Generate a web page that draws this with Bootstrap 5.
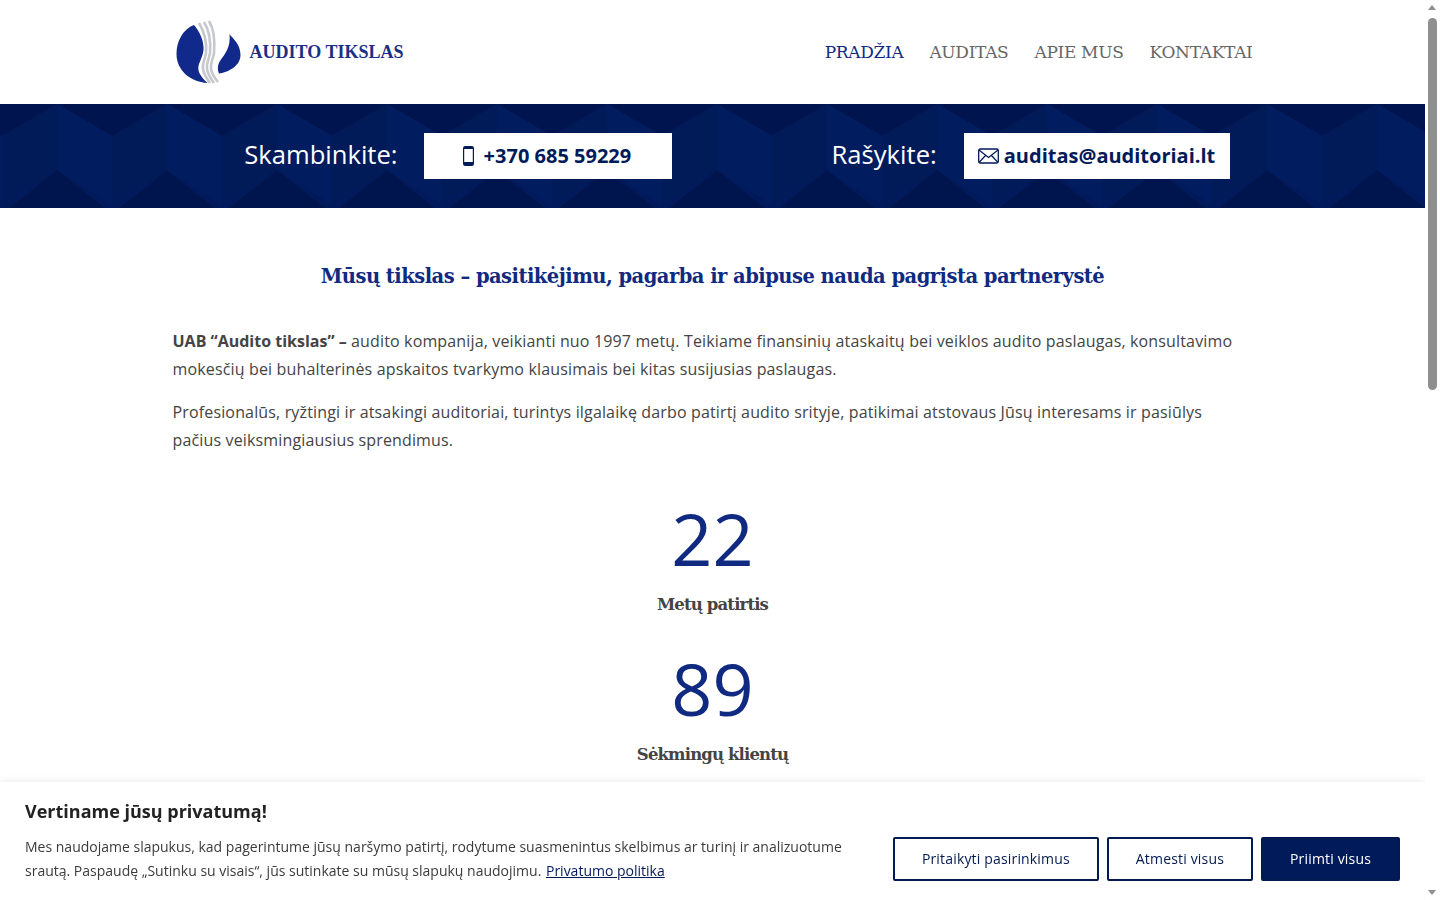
<!DOCTYPE html>
<html lang="lt">
<head>
  <meta charset="UTF-8" />
  <meta name="viewport" content="width=device-width, initial-scale=1.0" />
  <title>Audito tikslas</title>
  <link href="https://cdn.jsdelivr.net/npm/bootstrap@5.3.3/dist/css/bootstrap.min.css" rel="stylesheet" />
  <script src="https://cdn.jsdelivr.net/npm/bootstrap@5.3.3/dist/js/bootstrap.bundle.min.js"></script>
  <style>
    html, body { height: 100%; overflow: hidden; }
    body { font-family: "Open Sans", sans-serif; color: #444; background: #fff; }
    .page { width: 1425px; height: 900px; overflow: hidden; }
    .wrap { width: 1080px; margin-left: 172.5px; }
    .top-bar { height: 104px; }
    .logo-text { font-family: "Liberation Serif", serif; font-weight: 700; font-size: 18px; fill: #1a2f86; }
    .top-nav { gap: 26px; padding-top: 2px; }
    .top-nav a { font-family: "DejaVu Serif", serif; font-size: 17px; color: #666; text-decoration: none; letter-spacing: -.32px; }
    .top-nav a.active { color: #0f2a80; }
    .contact-band { height: 104px; background: #011a5a; position: relative; overflow: hidden; }
    .contact-band .pattern { position: absolute; inset: 0; width: 100%; height: 100%; }
    .contact-row { position: relative; height: 104px; padding-left: 49px; }
    .contact-label { color: #fff; font-size: 25.6px; line-height: 1; margin-bottom: 3px; }
    .contact-box { background: #fff; height: 46px; color: #011a5a; font-size: 20px; font-weight: 700; text-decoration: none; }
    .box-phone { width: 248px; margin-left: 26px; margin-right: 160px; padding-left: 39px; gap: 10px; }
    .box-mail { width: 266px; margin-left: 27px; padding-left: 14px; gap: 5px; }
    .lead-title { font-family: "DejaVu Serif", serif; font-size: 19.5px; font-weight: 700; color: #0f2a80; letter-spacing: -.52px; margin: 0; padding-top: 57px; line-height: 24px; }
    .intro { padding-top: 39.4px; width: 1068px; font-size: 16px; line-height: 27.5px; letter-spacing: .15px; }
    .intro strong { letter-spacing: 0; }
    .intro p { margin-bottom: 16px; }
    .stats { padding-top: 23px; }
    .stat { height: 150px; }
    .stat-num { font-size: 72px; line-height: 90px; color: #0f2a80; margin-bottom: 10px; }
    .stat-label { font-family: "DejaVu Serif", serif; font-size: 16.5px; font-weight: 700; color: #444; letter-spacing: -.85px; line-height: 24px; }
    .cookie { position: fixed; left: 0; bottom: 0; width: 1425px; height: 118px; background: #fff; box-shadow: 0 0 8px rgba(0,0,0,.1); padding: 17px 25px; border-radius: 2px; }
    .cookie h5 { font-size: 18px; font-weight: 700; color: #222; margin: 0 0 12px; line-height: 24px; }
    .cookie p { font-size: 14px; line-height: 24px; color: #3b3b3b; margin: 0; width: 840px; }
    .cookie p a { color: #011a5a; margin-left: 1px; }
    .btn-ck { font-size: 14px; font-weight: 500; letter-spacing: .17px; height: 44px; border: 2px solid #011a4f; border-radius: 2px; color: #011a4f; background: #fff; padding: 0 27px 2px; display: flex; align-items: center; }
    .btn-ck.solid { background: #011a5a; color: #fff; }
    .scroll-fake { position: fixed; top: 0; right: 0; width: 15px; height: 900px; background: #fff; }
    .scroll-fake .thumb { position: absolute; top: 18px; left: 3px; width: 9px; height: 372px; background: #8f8f8f; border-radius: 5px; }
    .scroll-fake .arr { position: absolute; left: 3px; width: 0; height: 0; border-left: 4.5px solid transparent; border-right: 4.5px solid transparent; }
    .scroll-fake .up { top: 5px; border-bottom: 5px solid #8f8f8f; }
    .scroll-fake .down { bottom: 5px; border-top: 5px solid #8f8f8f; }
  </style>
</head>
<body>
  <div class="page">
    <div class="top-bar">
      <div class="wrap d-flex justify-content-between align-items-center h-100">
        <svg width="236" height="70" viewBox="0 0 236 70" role="img" aria-label="Audito tikslas">
          <path d="M21 8 C10 12 3.5 24 3.5 37 C3.5 53 17 65 34.5 66 C26 58 24 53 26 47 C29 40 31 35 30.5 30 C30 21 26 14 21 8Z" fill="#11298a"/>
          <path d="M56.5 17 C60 22 67.5 27 67.5 38 C67.5 48 57 55 46 56.5 C44 52 45 47 47 44 C52 37 58 30 56.5 17Z" fill="#11298a"/>
          <g fill="none" stroke="#c6c8ce" stroke-width="2.6">
            <path d="M26 6 C31 14 34 24 33 36 C32 43 29 46 30 52 C31 58 34 62 37 66"/>
            <path d="M31 5 C36 13 38 24 37 36 C36 43 33 46 34 52 C35 58 38 62 41 66"/>
            <path d="M36 4 C41 12 42 24 41 36 C40 43 37 46 38 52 C39 58 42 61 45 65"/>
          </g>
          <text class="logo-text" x="76.5" y="41" textLength="154">AUDITO TIKSLAS</text>
        </svg>
        <nav class="top-nav d-flex">
          <a class="active" href="#">PRADŽIA</a>
          <a href="#">AUDITAS</a>
          <a href="#">APIE MUS</a>
          <a href="#">KONTAKTAI</a>
        </nav>
      </div>
    </div>

    <div class="contact-band">
      <svg class="pattern" aria-hidden="true">
        <defs>
          <pattern id="zig" width="110" height="104" patternUnits="userSpaceOnUse" patternTransform="translate(57 0)">
            <rect width="110" height="104" fill="#011a5b"/>
            <path d="M0 0 L55 32 V100 L0 66Z" fill="#021c60"/>
            <path d="M55 32 L110 0 V66 L55 100Z" fill="#011a58"/>
            <path d="M0 0 L55 32 L110 0Z" fill="#00154f"/>
            <path d="M0 66 L48 104 H0Z" fill="#00144d"/>
            <path d="M110 66 L62 104 H110Z" fill="#00144d"/>
          </pattern>
        </defs>
        <rect width="100%" height="100%" fill="url(#zig)"/>
      </svg>
      <div class="contact-row d-flex align-items-center justify-content-center">
        <span class="contact-label">Skambinkite:</span>
        <a class="contact-box box-phone d-flex align-items-center" href="#">
          <svg width="11" height="20" viewBox="0 0 11 20"><rect x=".6" y=".6" width="9.8" height="18.8" rx="1.6" fill="none" stroke="#011a5a" stroke-width="1.2"/><rect x="1" y="16" width="9" height="3" fill="#011a5a"/><rect x="1" y="1" width="9" height="2" fill="#011a5a"/></svg>
          +370 685 59229
        </a>
        <span class="contact-label">Rašykite:</span>
        <a class="contact-box box-mail d-flex align-items-center" href="#">
          <svg width="21" height="16" viewBox="0 0 21 16"><rect x=".7" y="1" width="19.6" height="14" rx="1.5" fill="none" stroke="#011a5a" stroke-width="1.3"/><path d="M1 2 L10.5 9.5 L20 2 M1 14.5 L7.5 7.5 M20 14.5 L13.5 7.5" fill="none" stroke="#011a5a" stroke-width="1.2"/></svg>
          auditas@auditoriai.lt
        </a>
      </div>
    </div>

    <div class="wrap">
      <h1 class="lead-title text-center">Mūsų tikslas – pasitikėjimu, pagarba ir abipuse nauda pagrįsta partnerystė</h1>
      <div class="intro">
        <p><strong>UAB “Audito tikslas” –</strong> audito kompanija, veikianti nuo 1997 metų. Teikiame finansinių ataskaitų bei veiklos audito paslaugas, konsultavimo mokesčių bei buhalterinės apskaitos tvarkymo klausimais bei kitas susijusias paslaugas.</p>
        <p>Profesionalūs, ryžtingi ir atsakingi auditoriai, turintys ilgalaikę darbo patirtį audito srityje, patikimai atstovaus Jūsų interesams ir pasiūlys pačius veiksmingiausius sprendimus.</p>
      </div>
      <div class="stats text-center">
        <div class="stat"><div class="stat-num">22</div><div class="stat-label">Metų patirtis</div></div>
        <div class="stat"><div class="stat-num">89</div><div class="stat-label">Sėkmingų klientų</div></div>
      </div>
    </div>
  </div>

  <div class="cookie">
    <h5>Vertiname jūsų privatumą!</h5>
    <div class="d-flex justify-content-between align-items-center">
      <p>Mes naudojame slapukus, kad pagerintume jūsų naršymo patirtį, rodytume suasmenintus skelbimus ar turinį ir analizuotume srautą. Paspaudę „Sutinku su visais“, jūs sutinkate su mūsų slapukų naudojimu. <a href="#">Privatumo politika</a></p>
      <div class="d-flex gap-2">
        <button class="btn-ck" type="button">Pritaikyti pasirinkimus</button>
        <button class="btn-ck" type="button">Atmesti visus</button>
        <button class="btn-ck solid" type="button">Priimti visus</button>
      </div>
    </div>
  </div>

  <div class="scroll-fake" aria-hidden="true">
    <div class="arr up"></div>
    <div class="thumb"></div>
    <div class="arr down"></div>
  </div>
</body>
</html>
